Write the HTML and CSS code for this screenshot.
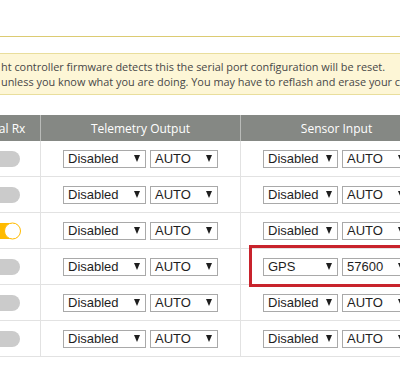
FILE: index.html
```html
<!DOCTYPE html>
<html lang="en">
  <head>
    <meta charset="UTF-8" />
    <title>Ports</title>
    <meta name="viewport" content="width=device-width, initial-scale=1.0" />
    <link rel="stylesheet" href="styles.css">
  </head>
  <body>
    <div class="tab-bar"></div>

    <!-- NOTE BOX -->
    <div class="note">
      <p>ht controller firmware detects this the serial port configuration will be reset.</p>
      <p>unless you know what you are doing. You may have to reflash and erase your configuration if you do.</p>
    </div>

    <!-- PORTS TABLE -->
    <div class="ports">
      <div class="row head">
        <div class="cell">Serial Rx</div>
        <div class="cell">Telemetry Output</div>
        <div class="cell">Sensor Input</div>
      </div>

      <div class="row">
        <div class="cell"><span class="switch"></span></div>
        <div class="cell">
          <span class="select wide">Disabled</span>
          <span class="select baud">AUTO</span>
        </div>
        <div class="cell">
          <span class="select">Disabled</span>
          <span class="select baud">AUTO</span>
        </div>
      </div>

      <div class="row">
        <div class="cell"><span class="switch"></span></div>
        <div class="cell">
          <span class="select wide">Disabled</span>
          <span class="select baud">AUTO</span>
        </div>
        <div class="cell">
          <span class="select">Disabled</span>
          <span class="select baud">AUTO</span>
        </div>
      </div>

      <div class="row">
        <div class="cell"><span class="switch on"><span class="knob"></span></span></div>
        <div class="cell">
          <span class="select wide">Disabled</span>
          <span class="select baud">AUTO</span>
        </div>
        <div class="cell">
          <span class="select">Disabled</span>
          <span class="select baud">AUTO</span>
        </div>
      </div>

      <div class="row">
        <div class="cell"><span class="switch"></span></div>
        <div class="cell">
          <span class="select wide">Disabled</span>
          <span class="select baud">AUTO</span>
        </div>
        <div class="cell highlight">
          <span class="select">GPS</span>
          <span class="select baud">57600</span>
          <span class="mark"></span>
        </div>
      </div>

      <div class="row">
        <div class="cell"><span class="switch"></span></div>
        <div class="cell">
          <span class="select wide">Disabled</span>
          <span class="select baud">AUTO</span>
        </div>
        <div class="cell">
          <span class="select">Disabled</span>
          <span class="select baud">AUTO</span>
        </div>
      </div>

      <div class="row">
        <div class="cell"><span class="switch"></span></div>
        <div class="cell">
          <span class="select wide">Disabled</span>
          <span class="select baud">AUTO</span>
        </div>
        <div class="cell">
          <span class="select">Disabled</span>
          <span class="select baud">AUTO</span>
        </div>
      </div>
    </div>
  </body>
</html>
```

FILE: styles.css
```css
/* RESET */
* {
  margin: 0;
  padding: 0;
  box-sizing: border-box;
}
:root {
  --accent: #ffbb00;
  --line: #e2e2e2;
  --head-bg: #858884;
}

body {
  width: 400px;
  height: 385px;
  overflow: hidden;
  background: #fff;
  font-family: "Open Sans", sans-serif;
}

/* Top tab bar edge */
.tab-bar {
  height: 37px;
  border-bottom: 1px solid #dccb72;
}

/* NOTE BOX */
.note {
  margin: 16px -2px 0;
  padding: 5px 2px;
  background: #fdf6d6;
  border: 1px solid #e9de9c;
  color: #474747;
  font-size: 10.9px;
  line-height: 15px;
  white-space: nowrap;
  overflow: hidden;
}

/* PORTS TABLE */
.ports {
  margin: 20px 0 0 -37px;
  width: 470px;
}
.row {
  display: grid;
  grid-template-columns: 78px 200px 192px;
  height: 36px;
  border-bottom: 1px solid var(--line);
}
.cell {
  display: flex;
  align-items: center;
  justify-content: center;
  gap: 4px;
  border-right: 1px solid var(--line);
}
.row.head {
  height: 26px;
  background: var(--head-bg);
  border-bottom: none;
  color: #fff;
  font-size: 12px;
}
.row.head .cell {
  border-right-color: #b9bbb8;
}

/* Toggle switch */
.switch {
  position: relative;
  width: 36px;
  height: 16px;
  border-radius: 8px;
  background: #cbcbcb;
}
.switch.on {
  background: var(--accent);
}
.switch .knob {
  position: absolute;
  right: -1px;
  top: 50%;
  width: 17px;
  height: 17px;
  transform: translateY(-50%);
  border-radius: 50%;
  background: #fff;
  border: 1.5px solid var(--accent);
}

/* Select boxes */
.select {
  display: flex;
  align-items: center;
  justify-content: space-between;
  width: 75px;
  height: 18px;
  padding: 0 5px 0 4px;
  border: 1px solid #a9a9a9;
  background: #fff;
  color: #1e1e1e;
  font-family: "Liberation Sans", Arial, sans-serif;
  font-size: 13px;
}
.select::after {
  content: "";
  border-left: 3px solid transparent;
  border-right: 3px solid transparent;
  border-top: 7px solid #1e1e1e;
  margin-bottom: 1px;
}
.select.wide {
  width: 83px;
}
.select.baud {
  width: 68px;
}

/* Red highlight around the GPS row */
.highlight {
  position: relative;
}
.highlight .mark {
  position: absolute;
  top: -4px;
  left: 8px;
  width: 200px;
  height: 42px;
  border: 3px solid #c8232c;
}
```
